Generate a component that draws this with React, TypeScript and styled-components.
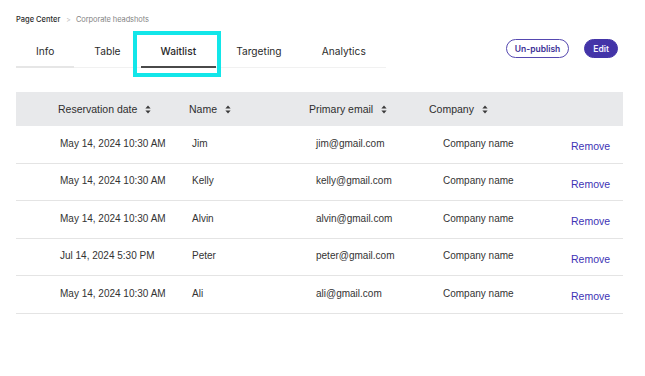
import React from "react";
import styled, { createGlobalStyle } from "styled-components";

const GlobalStyle = createGlobalStyle`
  body {
    margin: 0;
    background: #ffffff;
    font-family: "Inter", "Liberation Sans", sans-serif;
    color: #222;
  }
`;

type Reservation = {
  date: string;
  name: string;
  email: string;
  company: string;
};

const reservations: Reservation[] = [
  { date: "May 14, 2024 10:30 AM", name: "Jim", email: "jim@gmail.com", company: "Company name" },
  { date: "May 14, 2024 10:30 AM", name: "Kelly", email: "kelly@gmail.com", company: "Company name" },
  { date: "May 14, 2024 10:30 AM", name: "Alvin", email: "alvin@gmail.com", company: "Company name" },
  { date: "Jul 14, 2024 5:30 PM", name: "Peter", email: "peter@gmail.com", company: "Company name" },
  { date: "May 14, 2024 10:30 AM", name: "Ali", email: "ali@gmail.com", company: "Company name" },
];

const tabs = ["Info", "Table", "Waitlist", "Targeting", "Analytics"];
const columns = ["Reservation date", "Name", "Primary email", "Company"];
// row cells sit a few px right of their header labels
const rowInsets = [44, 3, 7, 14];

function SortIcon() {
  return (
    <svg width="6" height="9" viewBox="0 0 6 9">
      <path d="M3 0.5 L5.6 3.6 H0.4 Z" fill="#3a3a3a" />
      <path d="M3 8.5 L5.6 5.4 H0.4 Z" fill="#3a3a3a" />
    </svg>
  );
}

export default function App() {
  const activeTab = "Waitlist";

  return (
    <Page>
      <GlobalStyle />
      <Breadcrumb>
        <Crumb $current>Page Center</Crumb>
        <Chevron>&gt;</Chevron>
        <Crumb>Corporate headshots</Crumb>
      </Breadcrumb>

      <TopBar>
        <TabList>
          {tabs.map((tab, i) => (
            <Tab key={tab} $active={tab === activeTab} $first={i === 0}>
              {tab}
              {tab === activeTab && <Highlight />}
            </Tab>
          ))}
        </TabList>
        <Actions>
          <OutlineButton>Un-publish</OutlineButton>
          <SolidButton>Edit</SolidButton>
        </Actions>
      </TopBar>

      <Table>
        <HeaderRow>
          {columns.map((col, i) => (
            <HeaderCell key={col} $inset={i === 0 ? 42 : 0}>
              {col}
              <SortIcon />
            </HeaderCell>
          ))}
          <HeaderCell $inset={0} />
        </HeaderRow>
        {reservations.map((r, idx) => (
          <BodyRow key={idx}>
            <Cell $inset={rowInsets[0]}>{r.date}</Cell>
            <Cell $inset={rowInsets[1]}>{r.name}</Cell>
            <Cell $inset={rowInsets[2]}>{r.email}</Cell>
            <Cell $inset={rowInsets[3]}>{r.company}</Cell>
            <RemoveLink>Remove</RemoveLink>
          </BodyRow>
        ))}
      </Table>
    </Page>
  );
}

const Page = styled.div`
  width: 645px;
  height: 376px;
  padding: 13px 22px 0 16px;
  box-sizing: border-box;
  overflow: hidden;
`;

const Breadcrumb = styled.nav`
  display: flex;
  align-items: center;
  height: 12px;
  font-size: 7.5px;
`;

const Crumb = styled.span<{ $current?: boolean }>`
  color: ${({ $current }) => ($current ? "#2b2b2b" : "#858585")};
  font-weight: ${({ $current }) => ($current ? 500 : 400)};
  letter-spacing: ${({ $current }) => ($current ? "0" : "-0.1px")};
`;

const Chevron = styled.span`
  color: #b5b5b5;
  font-size: 7px;
  padding: 0 5px 0 6px;
`;

const TopBar = styled.div`
  display: flex;
  align-items: flex-start;
  justify-content: space-between;
  margin-top: 12px;
`;

const TabList = styled.div`
  display: flex;
  border-bottom: 1px solid #f1f1f1;
`;

const Tab = styled.div<{ $active: boolean; $first: boolean }>`
  position: relative;
  padding: 7px 20px 9px;
  font-size: 10.2px;
  line-height: 14px;
  color: #2a2a2a;
  font-weight: ${({ $active }) => ($active ? 500 : 400)};
  margin-bottom: -1px;
  border-bottom: ${({ $active, $first }) =>
    $active ? "2px solid #4a4a4a" : $first ? "2px solid #e6e6e6" : "1px solid transparent"};
  padding-bottom: ${({ $active, $first }) => ($active || $first ? "8px" : "9px")};
`;

const Highlight = styled.span`
  position: absolute;
  left: -8px;
  right: -5px;
  top: -6px;
  bottom: -11px;
  border: 4px solid #12e6e9;
  pointer-events: none;
`;

const Actions = styled.div`
  display: flex;
  gap: 15px;
  margin-top: 2px;
  margin-right: 5px;
`;

const BaseButton = styled.button`
  height: 19px;
  border-radius: 10px;
  font-family: "Inter", "Liberation Sans", sans-serif;
  font-size: 8.5px;
  font-weight: 600;
  padding: 0 8px;
  cursor: pointer;
`;

const OutlineButton = styled(BaseButton)`
  background: #ffffff;
  border: 1px solid #5548b0;
  color: #3b2f96;
`;

const SolidButton = styled(BaseButton)`
  background: #4334a8;
  border: 1px solid #4334a8;
  color: #f3f1ff;
`;

const Table = styled.div`
  margin-top: 24px;
  font-family: "Liberation Sans", Arial, sans-serif;
`;

const gridColumns = "173px 120px 120px 142px 1fr";

const HeaderRow = styled.div`
  display: grid;
  grid-template-columns: ${gridColumns};
  height: 34px;
  align-items: center;
  background: #e8e9eb;
`;

const HeaderCell = styled.div<{ $inset: number }>`
  display: flex;
  align-items: center;
  gap: 8px;
  padding-left: ${({ $inset }) => $inset}px;
  font-size: 10.5px;
  color: #2e2e2e;
`;

const BodyRow = styled.div`
  display: grid;
  grid-template-columns: ${gridColumns};
  height: 37.5px;
  align-items: center;
  border-bottom: 1px solid #e4e4e4;
  box-sizing: border-box;
`;

const Cell = styled.div<{ $inset: number }>`
  padding-left: ${({ $inset }) => $inset}px;
  font-size: 10px;
  color: #333333;
  margin-top: -2px;
`;

const RemoveLink = styled.a`
  font-size: 10.5px;
  color: #3d33b5;
  margin-top: 4px;
  cursor: pointer;
`;
